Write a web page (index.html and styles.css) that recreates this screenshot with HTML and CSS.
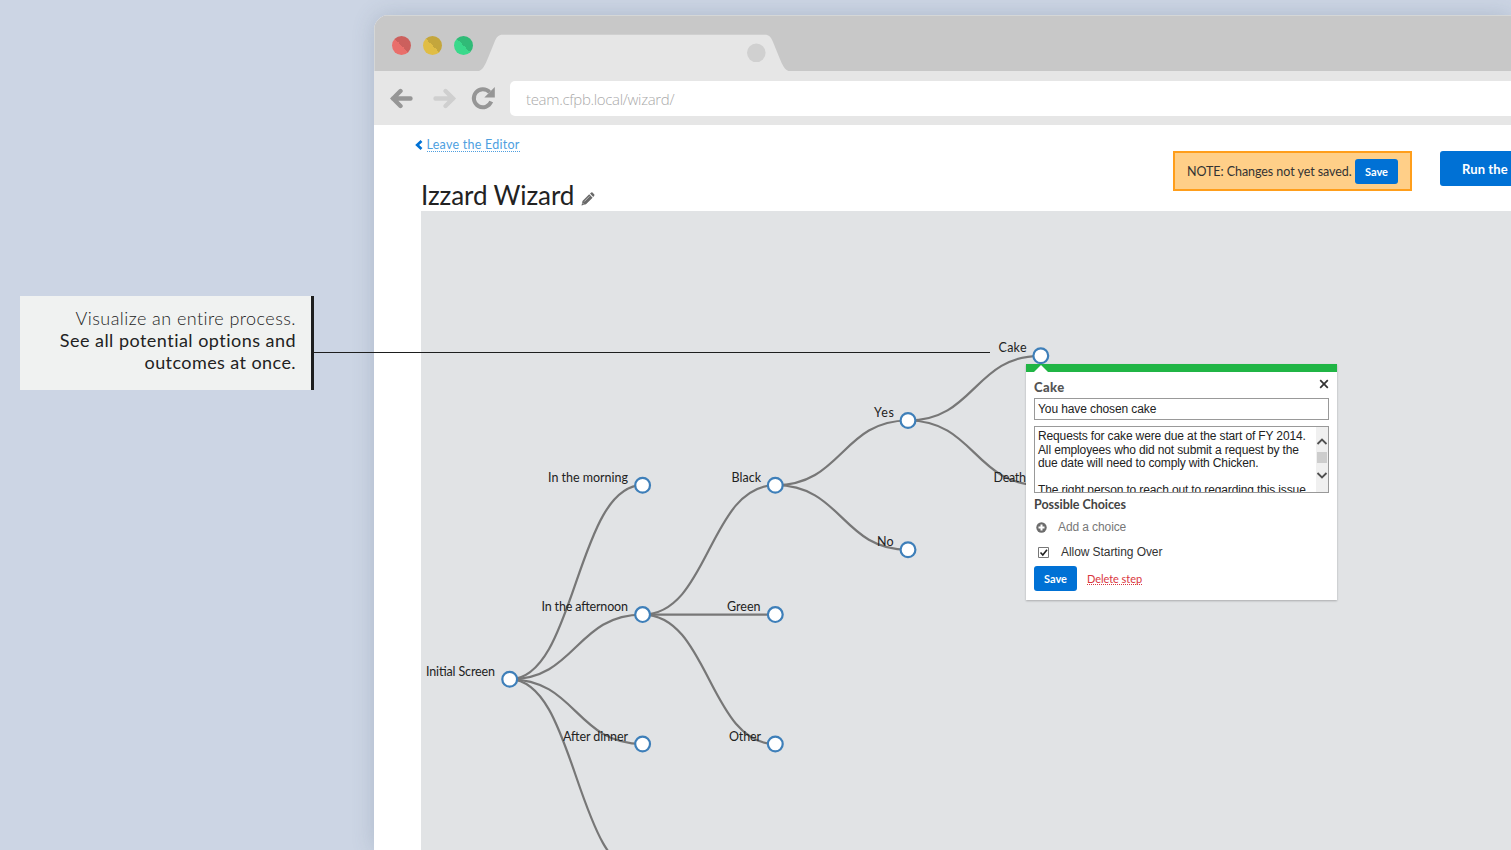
FILE: index.html
```html
<!DOCTYPE html>
<html lang="en">
<head>
<meta charset="utf-8">
<title>Izzard Wizard</title>
<link rel="stylesheet" href="styles.css">
</head>
<body>
<aside class="side">
  <div class="callout">
    <p class="callout-light"><span>Visualize an entire process.</span></p>
    <p class="callout-strong"><span class="c1">See all potential options and</span><br><span class="c2">outcomes at once.</span></p>
    <i class="leader"></i>
  </div>
</aside>
<main class="browser">
  <header class="tabbar">
    <div class="lights"><i class="light red"></i><i class="light yellow"></i><i class="light green"></i></div>
    <svg class="tab" width="314" height="38" viewBox="0 0 314 38">
      <path d="M0 37.500C6 36.500 8 31 11 24L17.500 8C19.500 3 21.500 .7 25.500 .7H288C292 .7 294 3 296 8L302.500 24C305.500 31 307.500 36.500 313.500 37.500V38H0Z" fill="#e6e6e6"/>
      <circle cx="279.300" cy="18.800" r="9.300" fill="#d0d0d0"/>
    </svg>
  </header>
  <div class="toolbar">
    <svg class="nav" width="110" height="28" viewBox="0 0 110 28">
      <g fill="none" stroke-width="4.400" stroke-linecap="round">
        <path d="M3 14.500H20.500M10.500 7L3 14.500L10.500 22" stroke="#969696"/>
        <path d="M45.500 14.500H63M55.500 7L63 14.500L55.500 22" stroke="#cfcfcf"/>
        <path d="M99.600 8.300A9 9 0 1 0 101.200 17.600" stroke="#969696" stroke-width="4" stroke-linecap="butt"/>
      </g>
      <path d="M104.800 3V13.500H94.300Z" fill="#969696"/>
    </svg>
    <div class="address"><span>team.cfpb.local/wizard/</span></div>
  </div>
  <section class="page">
    <div class="top">
      <div class="heading">
        <div class="back"><svg width="8" height="10" viewBox="0 0 8 10"><path d="M6.500 1L2.200 5L6.500 9" fill="none" stroke="#0071d5" stroke-width="2.700"/></svg><a>Leave the Editor</a></div>
        <h1><span>Izzard Wizard</span><svg width="14" height="14" viewBox="0 0 14 14" fill="#696969"><path d="M.5 13.500L1.500 9L8.200 2.300L11.600 5.700L5 12.300ZM9 1.500L10.300.4Q10.900 0 11.500.6L13.300 2.400Q13.800 3 13.300 3.600L12.300 4.900Z"/><path d="M3.300 9.500L8.500 4.300M1.200 10.700L3.200 12.700" stroke="#ddd" stroke-width=".7"/></svg></h1>
      </div>
      <div class="note"><span class="note-text">NOTE: Changes not yet saved.</span><b class="btn">Save</b></div>
      <div class="run"><span>Run the</span></div>
    </div>
    <div class="canvas">
      <svg class="graph" width="1090" height="639" viewBox="421 211 1090 639">
        <g fill="none" stroke="#777" stroke-width="2.200">
          <path d="M509.700 679.300C576 679.300 576 485.200 642.600 485.200"/>
          <path d="M509.700 679.300C576 679.300 576 614.600 642.600 614.600"/>
          <path d="M509.700 679.300C576 679.300 576 744 642.600 744"/>
          <path d="M509.700 679.300C576 679.300 576 873.500 642.600 873.500"/>
          <path d="M642.600 614.600C709 614.600 709 485.200 775.300 485.200"/>
          <path d="M642.600 614.600H775.300"/>
          <path d="M642.600 614.600C709 614.600 709 744 775.300 744"/>
          <path d="M775.300 485.200C842 485.200 842 420.500 908 420.500"/>
          <path d="M775.300 485.200C842 485.200 842 549.800 908 549.800"/>
          <path d="M908 420.500C974.500 420.500 974.500 355.800 1040.800 355.800"/>
          <path d="M908 420.500C974.500 420.500 974.500 485.200 1040.800 485.200"/>
        </g>
        <g fill="#fff" stroke="#3e7fb9" stroke-width="2.200">
          <circle cx="509.700" cy="679.300" r="7.400"/><circle cx="642.600" cy="485.200" r="7.400"/><circle cx="642.600" cy="614.600" r="7.400"/><circle cx="642.600" cy="744" r="7.400"/><circle cx="775.300" cy="485.200" r="7.400"/><circle cx="775.300" cy="614.600" r="7.400"/><circle cx="775.300" cy="744" r="7.400"/><circle cx="908" cy="420.500" r="7.400"/><circle cx="908" cy="549.800" r="7.400"/><circle cx="1040.800" cy="355.800" r="7.400"/>
        </g>
        <g class="labels">
          <text x="426" y="676" textLength="69">Initial Screen</text>
          <text x="548" y="482" textLength="80">In the morning</text>
          <text x="541.500" y="611" textLength="86.500">In the afternoon</text>
          <text x="563" y="741" textLength="65">After dinner</text>
          <text x="731.500" y="482" textLength="29.500">Black</text>
          <text x="727" y="611" textLength="33.500">Green</text>
          <text x="729" y="741" textLength="32">Other</text>
          <text x="874" y="417" textLength="20">Yes</text>
          <text x="877" y="546" textLength="16.500">No</text>
          <text x="998.500" y="352" textLength="28">Cake</text>
          <text x="993.500" y="482" textLength="32.500">Death</text>
        </g>
      </svg>
      <div class="popup">
        <svg class="notch" width="14" height="7" viewBox="0 0 14 7"><path d="M0 7L7 0L14 7Z" fill="#fff"/></svg>
        <div class="popup-head"><b>Cake</b><svg width="10" height="10" viewBox="0 0 10 10"><path d="M1.200 1.200L8.800 8.800M8.800 1.200L1.200 8.800" stroke="#333" stroke-width="1.700"/></svg></div>
        <div class="field"><span>You have chosen cake</span></div>
        <div class="area">
          <div class="area-text"><span>Requests for cake were due at the start of FY 2014.</span><br><span>All employees who did not submit a request by the</span><br><span>due date will need to comply with Chicken.</span><br><br><span>The right person to reach out to regarding this issue</span></div>
          <svg class="scroll" width="12" height="65" viewBox="0 0 12 65"><path fill="#f0f0f0" d="M0 0h12v65H0z"/><path fill="#cdcdcd" d="M1 25h10v11H1z"/><path d="M1.500 17L6 12.500L10.500 17M1.500 46L6 50.500L10.500 46" fill="none" stroke="#505050" stroke-width="1.800"/></svg>
        </div>
        <div class="choices">Possible Choices</div>
        <div class="add"><svg width="11" height="11" viewBox="0 0 11 11"><circle cx="5.500" cy="5.500" r="5.200" fill="#6c6c6c"/><path d="M5.500 2.500V8.500M2.500 5.500H8.500" stroke="#fff" stroke-width="2"/></svg><span>Add a choice</span></div>
        <div class="allow"><svg width="12" height="12" viewBox="0 0 12 12"><path d="M.5.500H10.500V10.500H.5Z" fill="#fff" stroke="#777"/><path d="M2.500 5.500L4.800 8L9 2.800" fill="none" stroke="#222" stroke-width="1.600"/></svg><span>Allow Starting Over</span></div>
        <div class="actions"><b class="btn">Save</b><a>Delete step</a></div>
      </div>
    </div>
  </section>
</main>
</body>
</html>
```
FILE: styles.css
```css
* { box-sizing: border-box; }
body { margin: 0; width: 1511px; height: 850px; overflow: hidden; display: flex; background: #ccd5e4; font-family: Lato, sans-serif; color: #222; }
svg { display: block; flex: none; }
p { margin: 0; }
span { white-space: nowrap; }
.side { width: 374px; flex: none; padding: 296px 0 0 20px; position: relative; z-index: 2; }
.callout { position: relative; width: 294px; height: 94px; background: #f0f2f1; border-right: 3px solid #1d1e1e; padding: 11px 15px 0 0; text-align: right; font-size: 18px; line-height: 22px; }
.callout-light { font-weight: 300; letter-spacing: .44px; }
.callout-strong { letter-spacing: .47px; }
.c2 { letter-spacing: .42px; }
.leader { position: absolute; left: 294px; top: 56px; width: 676px; height: 1px; background: #1d1e1e; }
.browser { width: 1137px; flex: none; height: 835px; margin-top: 15px; border-radius: 15px 0 0 0; box-shadow: 0 0 22px rgba(80,100,125,.24); background: #fff; overflow: hidden; }
.tabbar { height: 56px; background: #c8c8c8; border-top: 1px solid #d5d7d7; border-left: 1px solid #d5d7d7; display: flex; padding-left: 17px; }
.lights { display: flex; gap: 12px; width: 85px; padding-top: 20px; }
.light { width: 19px; height: 19px; border-radius: 50%; }
.red { background: linear-gradient(45deg, #e96f6b 50%, #cc605d 50%); }
.yellow { background: linear-gradient(45deg, #e0bd45 50%, #c4a63c 50%); }
.green { background: linear-gradient(45deg, #39d98b 50%, #30bb77 50%); }
.tab { margin: 18px 0 0 0; }
.toolbar { height: 54px; background: #e6e6e6; display: flex; padding: 10px 0 0 14px; }
.nav { margin-top: 3px; margin-left: 2px; }
.address { height: 35px; flex: 1; margin-left: 10px; background: #fff; border-radius: 5px 0 0 5px; padding-left: 16px; font: 300 15px/37px "Open Sans", sans-serif; letter-spacing: -.33px; color: #aaa; }
.page { height: 725px; padding-left: 41px; }
.top { height: 86px; display: flex; align-items: flex-start; }
.heading { width: 758px; flex: none; }
.back { display: flex; align-items: center; height: 18px; margin-top: 11px; margin-left: -.500px; gap: 4px; }
.back a { color: #4e9fdf; font-size: 12.500px; line-height: 13px; border-bottom: 1px dotted #4e9fdf; letter-spacing: .26px; }
h1 { margin: 24px 0 0 6px; height: 34px; display: flex; font-weight: 400; font-size: 26px; line-height: 34px; letter-spacing: -.1px; gap: 7px; }
h1 svg { margin-top: 14px; }
.note { width: 239px; height: 40px; margin-top: 26px; border: 2px solid #ff9e1b; background: #ffcf88; padding: 6px 12px 0 12px; display: flex; justify-content: space-between; flex: none; }
.note-text { font-size: 12.500px; line-height: 26px; letter-spacing: -.06px; color: #333; }
.btn { width: 43px; height: 25px; background: #0071d5; border-radius: 3px; color: #fff; font: 700 11px/26px Lato, sans-serif; text-align: center; }
.run { height: 35px; flex: 1; margin: 26px 0 0 28px; background: #0071d5; border-radius: 3px 0 0 3px; color: #fff; font-weight: 700; font-size: 13px; line-height: 36px; padding-left: 22px; letter-spacing: .1px; }
.canvas { position: relative; height: 639px; margin-left: 6px; background: #e1e3e5; }
.labels { font-size: 12.500px; fill: #222; }
.popup { position: absolute; left: 605px; top: 153px; width: 311px; height: 236px; background: #fff; border-top: 8px solid #20b545; padding: 7px 8px; box-shadow: 0 1px 2px rgba(0,0,0,.25); font: 12px/13.500px "Liberation Sans", sans-serif; color: #333; }
.notch { position: absolute; left: 8px; top: -7px; }
.popup-head { height: 19px; display: flex; justify-content: space-between; font: 700 13px/17px Lato, sans-serif; color: #555; }
.popup-head b { letter-spacing: .4px; }
.field { height: 22px; border: 1px solid #999; line-height: 20px; padding-left: 3px; color: #222; letter-spacing: -.1px; }
.area { height: 67px; margin-top: 6px; border: 1px solid #999; display: flex; justify-content: space-between; overflow: hidden; color: #222; }
.area-text { padding: 3px 0 0 3px; letter-spacing: -.135px; }
.choices { height: 18px; margin-top: 3px; font: 700 12.500px/18px Lato, sans-serif; letter-spacing: -.03px; color: #444; }
.add { display: flex; align-items: center; gap: 11px; height: 20px; margin: 4px 0 0 2px; color: #777; letter-spacing: -.1px; }
.add svg { margin-top: -2px; }
.allow { display: flex; align-items: center; gap: 11px; height: 20px; margin: 5px 0 0 4px; letter-spacing: -.07px; }
.actions { display: flex; gap: 10px; margin-top: 3px; align-items: center; }
.actions a { color: #d9363e; font: 11px/11px Lato, sans-serif; letter-spacing: -.06px; border-bottom: 1px dotted #d9363e; margin-top: 1px; }
```
